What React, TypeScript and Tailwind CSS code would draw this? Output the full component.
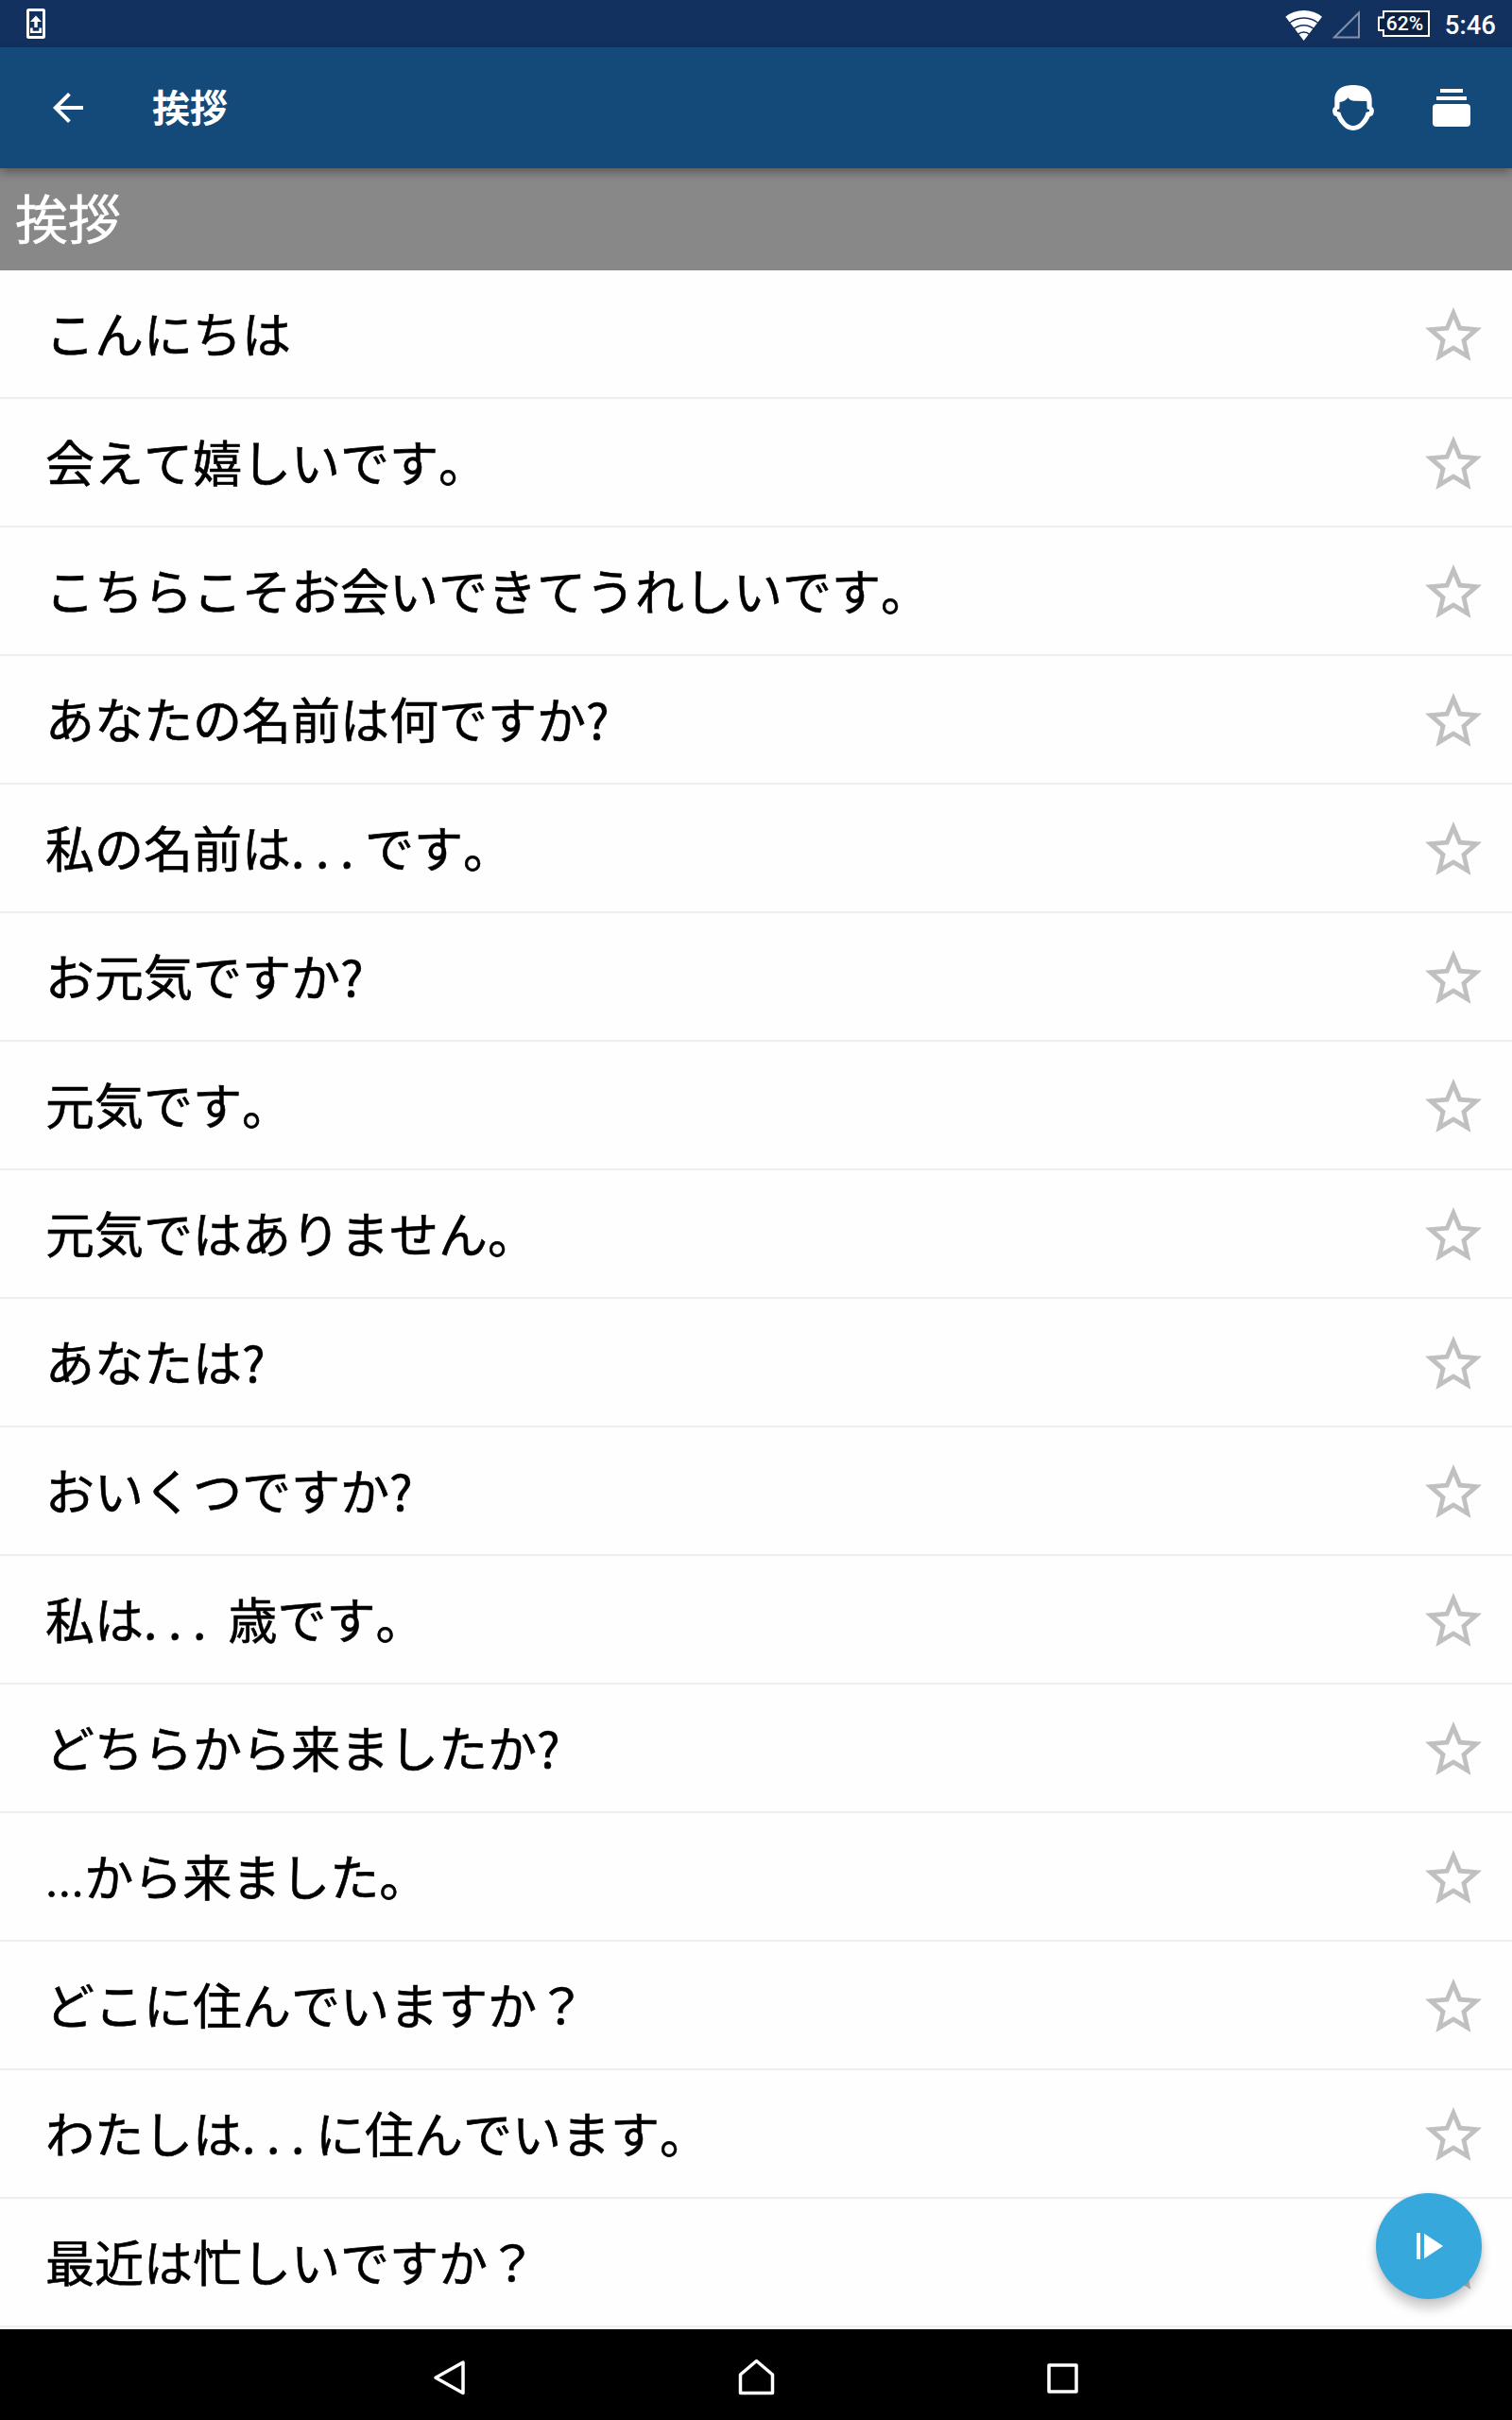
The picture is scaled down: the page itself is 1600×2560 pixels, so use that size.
import { Fragment } from 'react'

const phrases: string[] = [
  'こんにちは',
  '会えて嬉しいです。',
  'こちらこそお会いできてうれしいです。',
  'あなたの名前は何ですか?',
  '私の名前は...です。',
  'お元気ですか?',
  '元気です。',
  '元気ではありません。',
  'あなたは?',
  'おいくつですか?',
  '私は... 歳です。',
  'どちらから来ましたか?',
  '...から来ました。',
  'どこに住んでいますか？',
  'わたしは...に住んでいます。',
  '最近は忙しいですか？',
]

export default function App() {
  return (
    <div
      lang="ja"
      className="relative flex h-[2560px] w-[1600px] flex-col overflow-hidden bg-[#fefefe] font-['Noto_Sans_CJK_JP',sans-serif] [font-kerning:none]"
    >
      <StatusBar />
      <Toolbar />
      <h2 className="flex h-[108px] shrink-0 items-center bg-[#888888] pb-1.5 pl-4 text-[56px] leading-none text-white [-webkit-text-stroke:0.6px_#fff]">
        挨拶
      </h2>

      {/* Phrase list */}
      <ul className="h-[2178px] shrink-0 overflow-hidden">
        {phrases.map((phrase) => (
          <PhraseRow key={phrase} text={phrase} />
        ))}
      </ul>

      <button
        aria-label="Play"
        className="absolute top-[2320px] right-8 flex size-28 items-center justify-center rounded-full bg-[#36a8db] shadow-[0_10px_12px_rgba(0,0,0,0.2),0_0_4px_rgba(0,0,0,0.12)]"
      >
        <svg className="size-12" viewBox="0 0 48 48" fill="#fff">
          <path d="M11 10h4v28h-4zM19 10.7 39 24 19 37.3z" />
        </svg>
      </button>

      <NavBar />
    </div>
  )
}

function PhraseRow({ text }: { text: string }) {
  // A leading ellipsis is set tight, the ones inside a phrase are spaced out
  const parts = text.split('...')
  return (
    <li className="flex h-[136px] items-center justify-between border-b-2 border-[#eeeeee] pr-[26px] pl-12">
      <span className="pb-[3px] text-[52px] leading-none whitespace-pre text-black [-webkit-text-stroke:0.6px_#000]">
        {parts.map((part, i) => (
          <Fragment key={i}>
            {i > 0 && (
              <span className={parts[0] === '' ? 'font-[Roboto] leading-[0]' : 'tracking-[11.5px]'}>...</span>
            )}
            {part}
          </Fragment>
        ))}
      </span>
      <svg className="mt-[3px] size-[72px]" viewBox="0 0 24 24" fill="#c0c0c0">
        <path d="M22 9.24l-7.19-.62L12 2 9.19 8.63 2 9.24l5.46 4.73L5.82 21 12 17.27 18.18 21l-1.63-7.03L22 9.24zM12 15.4l-3.76 2.27 1-4.28-3.32-2.88 4.38-.38L12 6.1l1.71 4.04 4.38.38-3.32 2.88 1 4.28L12 15.4z" />
      </svg>
    </li>
  )
}

function StatusBar() {
  return (
    <div className="flex h-[50px] shrink-0 items-center justify-between bg-[#13315f] pr-[17px] pl-7 font-[Roboto] text-white">
      <svg className="h-8 w-5" viewBox="0 0 20 32" fill="none">
        <rect x="1.5" y="1.5" width="17" height="29" rx="1" stroke="#fff" strokeWidth="3" />
        <path d="M10 7.5 16 14h-4.3v6H8.300v-6H4zM4 20.500h2.700v3.300h6.600v-3.300H16V26H4z" fill="#fff" />
      </svg>
      <div className="flex h-full items-center">
        {/* Wi-Fi, signal */}
        <svg className="mt-1 mr-[11px] h-8 w-[39px]" viewBox="64 33 117 96">
          <path d="M123 129 65 53Q90 33 123 33T181 53z" fill="#fff" />
          <g fill="none" stroke="#13315f" strokeWidth="4.500">
            <circle cx="123" cy="129" r="72" />
            <circle cx="123" cy="129" r="49" />
            <circle cx="123" cy="129" r="27" />
          </g>
        </svg>
        <svg className="mt-0.5 mr-[19px] h-[30px] w-[29px]" viewBox="0 0 29 30" fill="none">
          <path d="M2 28.500H28V2.500z" stroke="#8090ad" strokeWidth="2" />
        </svg>
        <div className="relative mr-4 h-7 w-[55px]">
          <svg className="absolute inset-0 h-7 w-[55px]" viewBox="0 0 55 28">
            <path d="M6 1h48v26H6v-6H1V7.500h5z" fill="#0c2140" stroke="#fff" strokeWidth="2" />
          </svg>
          <span className="absolute top-0 left-[9px] text-[21px] leading-7 font-medium">62%</span>
        </div>
        <span className="mt-1 text-[27.500px] leading-none font-medium">5:46</span>
      </div>
    </div>
  )
}

function Toolbar() {
  return (
    <header className="relative z-10 flex h-32 shrink-0 items-center bg-[#144a79] pr-10 pl-12 text-white shadow-[0_4px_10px_rgba(0,0,0,0.35)]">
      <svg className="size-12" viewBox="0 0 24 24" fill="#fff">
        <path d="M20 11H7.83l5.59-5.59L12 4l-8 8 8 8 1.41-1.41L7.83 13H20v-2z" />
      </svg>
      <h1 className="ml-[65px] flex-1 pb-1 text-[40px] leading-none font-bold">挨拶</h1>
      <svg className="mr-14 size-12" viewBox="204 270 144 144">
        <path
          fillRule="evenodd"
          fill="#fff"
          d="M276 270C307 270 335 281 335 317V339C341 341 343 350 341 358C339 366 335 369 329 370C319 392 301 414 276 414C251 414 233 392 223 370C217 369 213 366 211 358C209 350 211 341 217 339V317C217 281 245 270 276 270zM233 324C245 323 253 318 260 310C262 316 268 319 278 320L319 321L320 346L327 348V354L317 356C311 377 295 399 276 399C257 399 241 377 235 356L225 354V348L232 346z"
        />
      </svg>
      <svg className="size-12" viewBox="0 0 48 48" fill="#fff">
        <path d="M12 4h24v4H12zM8 12h32v4H8z" />
        <rect x="4" y="20" width="40" height="24" rx="4" />
      </svg>
    </header>
  )
}

function NavBar() {
  return (
    <nav className="flex h-24 shrink-0 items-center justify-center gap-[277px] bg-black pt-3">
      <svg className="size-12" viewBox="0 0 48 48" fill="none" stroke="#fff" strokeWidth="3.500" strokeLinejoin="round">
        <path d="M39 5v32.500L10 21.300z" />
      </svg>
      <svg className="size-12" viewBox="0 0 48 48" fill="none" stroke="#fff" strokeWidth="3.500" strokeLinejoin="round">
        <path d="M7.500 37.500V18L24.500 3.500l17 14.500v19.500z" />
      </svg>
      <svg className="size-12" viewBox="0 0 48 48" fill="none" stroke="#fff" strokeWidth="3.500" strokeLinejoin="round">
        <path d="M9 8h29v28H9z" />
      </svg>
    </nav>
  )
}
